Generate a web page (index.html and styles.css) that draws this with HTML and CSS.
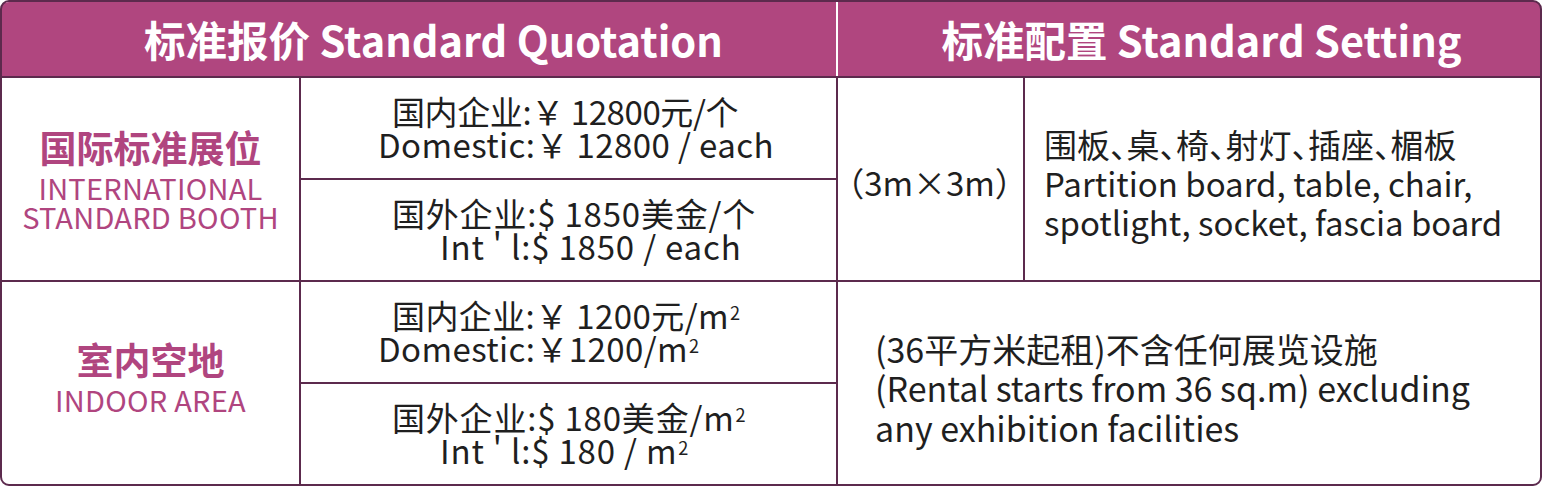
FILE: index.html
```html
<!DOCTYPE html>
<html lang="zh-CN">
<head>
<meta charset="utf-8">
<title>标准报价 Standard Quotation</title>
<link rel="stylesheet" href="styles.css">
</head>
<body>
<div class="table">
  <div class="head head-left">标准报价 Standard Quotation</div>
  <div class="head head-right">标准配置 Standard Setting</div>

  <div class="cat cat-booth">
    <div class="cat-cn">国际标准展位</div>
    <div class="cat-en">INTERNATIONAL<br>STANDARD BOOTH</div>
  </div>
  <div class="price">
    <div class="ln ln-cn ln-tight">国内企业:￥ 12800元/个</div>
    <div class="ln ln-dom">Domestic:￥ 12800 / each</div>
  </div>
  <div class="size">（3m×3m）</div>
  <div class="setting">
    <div class="cjk-list">围板、桌、椅、射灯、插座、楣板</div>
    <div>Partition board, table, chair,</div>
    <div>spotlight, socket, fascia board</div>
  </div>
  <div class="price">
    <div class="ln ln-cn ln-wide">国外企业:$ 1850美金/个</div>
    <div class="ln ln-int ln-wide">Int ' l:$ 1850 / each</div>
  </div>

  <div class="cat cat-indoor">
    <div class="cat-cn">室内空地</div>
    <div class="cat-en">INDOOR AREA</div>
  </div>
  <div class="price">
    <div class="ln ln-cn">国内企业:￥ 1200元/m<sup class="sq">2</sup></div>
    <div class="ln ln-dom">Domestic:￥1200/m<sup class="sq">2</sup></div>
  </div>
  <div class="rental">
    <div>(36平方米起租)不含任何展览设施</div>
    <div>(Rental starts from 36 sq.m) excluding</div>
    <div>any exhibition facilities</div>
  </div>
  <div class="price">
    <div class="ln ln-cn ln-wide">国外企业:$ 180美金/m<sup class="sq">2</sup></div>
    <div class="ln ln-int ln-wide">Int ' l:$ 180 / m<sup class="sq">2</sup></div>
  </div>
</div>
</body>
</html>
```

FILE: styles.css
```css
html, body {
  margin: 0;
  padding: 0;
  background: #ffffff;
}

body {
  font-family: "Noto Sans CJK SC", "Noto Sans", sans-serif;
  color: #1f1f1f;
}

.table {
  box-sizing: border-box;
  width: 1542px;
  height: 486px;
  border: 2px solid #5c2a4d;
  border-radius: 9px;
  overflow: hidden;
  background: #5c2a4d;
  display: grid;
  grid-template-columns: 297px 535px 185px 515px;
  grid-template-rows: 74px 100px 100px 100px 100px;
  gap: 2px;
}

.table > div {
  background: #ffffff;
}

.table > .head {
  background: #b0467f;
  color: #ffffff;
  font-weight: 700;
  font-size: 41.5px;
  display: flex;
  align-items: center;
  justify-content: center;
  white-space: nowrap;
}

.head-left {
  grid-column: 1 / 3;
  padding-left: 29px;
  box-shadow: 2px 0 0 #ffffff;
}

.head-right {
  grid-column: 3 / 5;
  padding-left: 25px;
}

.cat {
  grid-column: 1;
  display: flex;
  flex-direction: column;
  align-items: center;
  justify-content: center;
  color: #b0457f;
  text-align: center;
}

.cat-booth {
  grid-row: 2 / 4;
  padding-bottom: 4px;
}

.cat-indoor {
  grid-row: 4 / 6;
  padding-bottom: 16px;
}

.cat-cn {
  font-weight: 700;
  font-size: 37px;
  line-height: 47px;
}

.cat-en {
  font-size: 29px;
  line-height: 29px;
  margin-top: 2px;
  letter-spacing: 0.25px;
}

.price {
  grid-column: 2;
  display: flex;
  flex-direction: column;
  justify-content: center;
  padding-left: 77px;
  font-size: 33px;
  line-height: 33px;
  letter-spacing: 0.4px;
  white-space: nowrap;
}

.ln-cn {
  padding-left: 14px;
}

.ln-int {
  padding-left: 62px;
}

.ln-tight {
  letter-spacing: -0.4px;
}

.ln-wide {
  letter-spacing: 0.8px;
}

.sq {
  font-size: 0.55em;
  line-height: 0;
  vertical-align: 0.5em;
  margin-left: 1px;
}

.size {
  grid-column: 3;
  grid-row: 2 / 4;
  display: flex;
  align-items: center;
  justify-content: center;
  padding-top: 6px;
  padding-right: 2px;
  font-size: 33px;
  white-space: nowrap;
}

.setting {
  grid-column: 4;
  grid-row: 2 / 4;
  display: flex;
  flex-direction: column;
  justify-content: center;
  padding-left: 19px;
  padding-top: 8px;
  font-size: 33px;
  line-height: 39px;
  white-space: nowrap;
}

.cjk-list {
  font-feature-settings: "halt";
}

.rental {
  grid-column: 3 / 5;
  grid-row: 4 / 6;
  display: flex;
  flex-direction: column;
  justify-content: center;
  padding-left: 37px;
  padding-top: 10px;
  font-size: 34px;
  line-height: 39.5px;
  white-space: nowrap;
}
```
